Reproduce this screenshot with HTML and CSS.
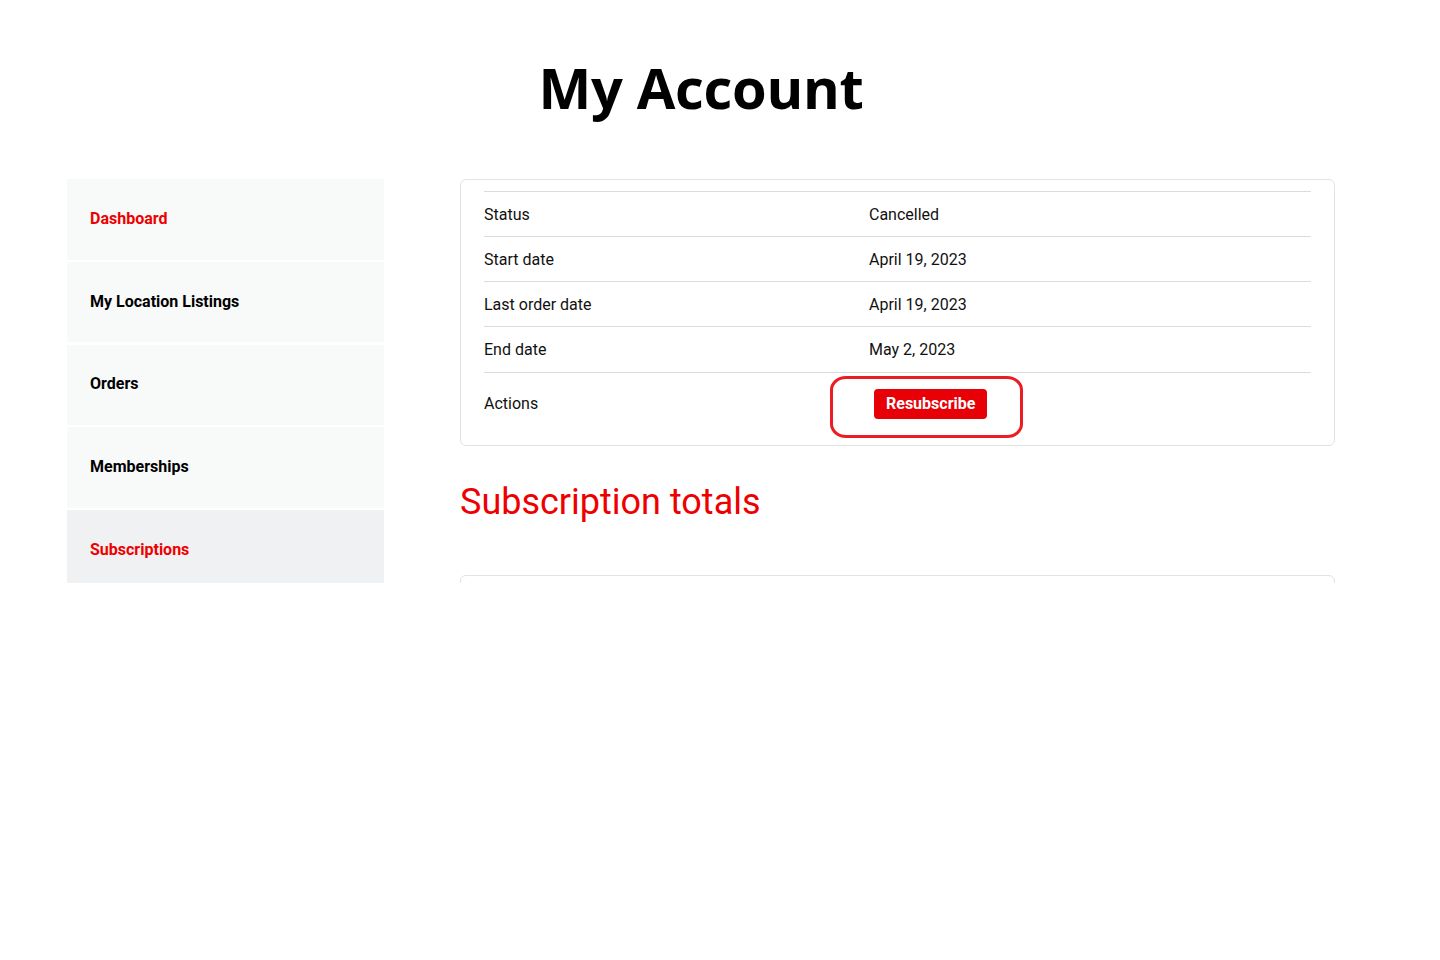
FILE: index.html
```html
<!DOCTYPE html>
<html lang="en">
    <head>
        <meta charset="UTF-8" />
        <title>My Account</title>
        <link rel="stylesheet" href="styles.css">
    </head>
    <body>
        <div class="page">
            <h1 class="page-title">My Account</h1>

            <div class="account">
                <!-- Account navigation -->
                <nav class="account-nav">
                    <a href="#" class="nav-item nav-red">Dashboard</a>
                    <a href="#" class="nav-item">My Location Listings</a>
                    <a href="#" class="nav-item">Orders</a>
                    <a href="#" class="nav-item">Memberships</a>
                    <a href="#" class="nav-item nav-red is-active">Subscriptions</a>
                </nav>

                <!-- Subscription details -->
                <div class="account-content">
                    <div class="card">
                        <table class="details">
                            <tr>
                                <td>Status</td>
                                <td>Cancelled</td>
                            </tr>
                            <tr>
                                <td>Start date</td>
                                <td>April 19, 2023</td>
                            </tr>
                            <tr>
                                <td>Last order date</td>
                                <td>April 19, 2023</td>
                            </tr>
                            <tr>
                                <td>End date</td>
                                <td>May 2, 2023</td>
                            </tr>
                            <tr class="actions-row">
                                <td>Actions</td>
                                <td>
                                    <span class="action-wrap">
                                        <a href="#" class="btn-red">Resubscribe</a>
                                        <span class="highlight"></span>
                                    </span>
                                </td>
                            </tr>
                        </table>
                    </div>

                    <h2 class="totals-title">Subscription totals</h2>

                    <div class="card card-totals"></div>
                </div>
            </div>
        </div>
    </body>
</html>
```

FILE: styles.css
```css
* {
  margin: 0;
  padding: 0;
  box-sizing: border-box;
}

body {
  background-color: #fff;
  font-family: Roboto, "Liberation Sans", sans-serif;
  color: #111;
}

.page {
  width: 1268px;
  margin-left: 67px;
}

.page-title {
  text-align: center;
  font-family: "Open Sans", sans-serif;
  font-weight: 700;
  font-size: 56px;
  line-height: 70px;
  color: #000;
  padding-top: 52px;
  margin-bottom: 57px;
  letter-spacing: -0.3px;
}

/* --- Layout --- */
.account {
  display: flex;
  gap: 76px;
  height: 404px;
  overflow: hidden;
}

/* --- Navigation --- */
.account-nav {
  width: 317px;
  flex-shrink: 0;
  display: flex;
  flex-direction: column;
  gap: 2.25px;
}

.nav-item {
  display: flex;
  align-items: center;
  flex-shrink: 0;
  height: 80.5px;
  padding: 0 23px 2px;
  background-color: #f8f9f9;
  color: #000;
  font-weight: 700;
  font-size: 16px;
  text-decoration: none;
}

.nav-red {
  color: #ee0000;
}

.nav-item.is-active {
  background-color: #f0f1f3;
}

/* --- Content --- */
.account-content {
  flex: 1;
}

.card {
  border: 1px solid #e2e2e2;
  border-radius: 6px;
  padding: 11px 23px 10px;
}

.details {
  width: 100%;
  border-collapse: collapse;
  border-top: 1px solid #dcdce0;
  font-size: 16px;
}

.details td {
  height: 45px;
  padding: 0;
  border-bottom: 1px solid #dcdce0;
  vertical-align: middle;
}

.details tr:nth-child(4) td {
  height: 46px;
}

.details td:first-child {
  width: 385px;
}

.actions-row td {
  height: 62px;
  border-bottom: none;
}

.action-wrap {
  position: relative;
  display: inline-block;
  margin-left: 5px;
}

.btn-red {
  display: inline-block;
  background-color: #e80008;
  color: #fff;
  font-weight: 700;
  font-size: 16px;
  line-height: 30px;
  padding: 0 12px;
  border-radius: 4px;
  text-decoration: none;
}

/* red marker drawn around the button */
.highlight {
  position: absolute;
  left: -44px;
  top: -13px;
  width: 193px;
  height: 62px;
  border: 3px solid #ec1c24;
  border-radius: 16px / 14px;
}

.totals-title {
  color: #ee0000;
  font-weight: 400;
  font-size: 36px;
  line-height: 42px;
  margin-top: 35px;
  margin-bottom: 52px;
}

.card-totals {
  height: 60px;
}
```
